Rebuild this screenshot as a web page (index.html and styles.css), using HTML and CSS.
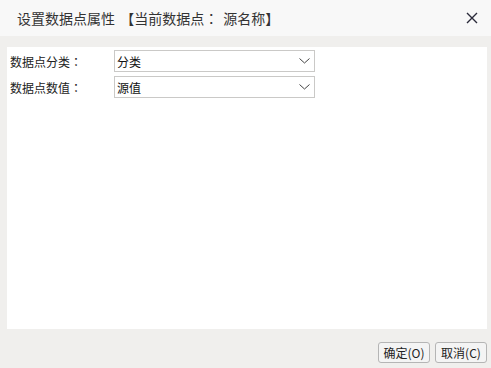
FILE: index.html
```html
<!DOCTYPE html>
<html>
<head>
<meta charset="utf-8">
<link rel="stylesheet" href="styles.css">
</head>
<body>
<div class="dialog">
  <div class="titlebar">
    <span class="title">设置数据点属性 【当前数据点<span class="punct">：</span> 源名称】</span>
    <svg class="close" width="12" height="12" viewBox="0 0 12 12"><path d="M1 1L11 11M11 1L1 11" stroke="#2a2a3a" stroke-width="1.4" fill="none"/></svg>
  </div>
  <div class="body">
    <div class="panel">
      <div class="row">
        <span class="label">数据点分类<span class="punct">：</span></span>
        <div class="select"><span>分类</span><svg width="11" height="6" viewBox="0 0 11 6"><path d="M0.5 0.5L5.5 5L10.5 0.5" stroke="#444" stroke-width="1" fill="none"/></svg></div>
      </div>
      <div class="row">
        <span class="label">数据点数值<span class="punct">：</span></span>
        <div class="select"><span>源值</span><svg width="11" height="6" viewBox="0 0 11 6"><path d="M0.5 0.5L5.5 5L10.5 0.5" stroke="#444" stroke-width="1" fill="none"/></svg></div>
      </div>
    </div>
    <div class="footer">
      <button class="btn">确定(O)</button>
      <button class="btn">取消(C)</button>
    </div>
  </div>
</div>
</body>
</html>
```

FILE: styles.css
```css
html, body {
  margin: 0;
  padding: 0;
}
body {
  width: 491px;
  height: 368px;
  overflow: hidden;
  font-family: "Noto Sans CJK SC", "Noto Sans", sans-serif;
  color: #222;
}
.dialog {
  display: flex;
  flex-direction: column;
  height: 368px;
  background: #f0efed;
}
.titlebar {
  height: 36px;
  background: #f8f8f8;
  display: flex;
  align-items: center;
  justify-content: space-between;
  padding: 0 13px 0 17px;
  box-sizing: border-box;
}
.title {
  font-size: 14px;
  color: #333;
  word-spacing: 2px;
}
.punct {
  font-family: "Noto Sans CJK TC", "Noto Sans CJK SC", sans-serif;
}
.close {
  display: block;
}
.body {
  flex: 1;
  display: flex;
  flex-direction: column;
  padding: 11px 4px 0 7px;
}
.panel {
  height: 282px;
  background: #fff;
  padding: 3px 0 0 3px;
  box-sizing: border-box;
  display: flex;
  flex-direction: column;
  gap: 4px;
}
.row {
  display: flex;
  align-items: center;
}
.label {
  width: 104px;
  font-size: 12px;
  color: #222;
}
.select {
  width: 201px;
  height: 22px;
  box-sizing: border-box;
  border: 1px solid #cac9c7;
  display: flex;
  align-items: center;
  justify-content: space-between;
  padding: 0 3px 0 2px;
  font-size: 12px;
  color: #111;
}
.select svg {
  margin-right: 1px;
}
.footer {
  display: flex;
  justify-content: flex-end;
  gap: 5px;
  padding-top: 13px;
}
.btn {
  width: 52px;
  height: 21px;
  padding: 0;
  font-family: "Noto Sans CJK SC", "Noto Sans", sans-serif;
  font-size: 12px;
  color: #222;
  background: #f4f4f4;
  border: 1px solid #b5b5b5;
  border-radius: 3px;
  line-height: 19px;
}
```
